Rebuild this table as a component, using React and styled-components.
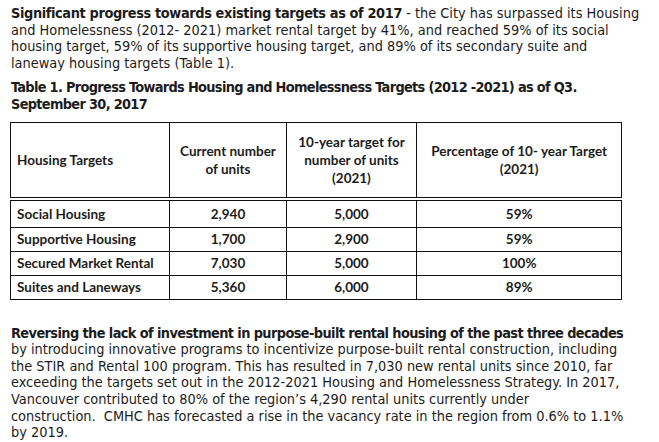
import React from 'react';
import styled, { createGlobalStyle } from 'styled-components';

const GlobalStyle = createGlobalStyle`
  body {
    margin: 0;
    background: #ffffff;
    color: #1c1c1c;
  }
`;

const Page = styled.div`
  width: 659px;
  height: 442px;
  overflow: hidden;
  padding: 5px 0 0 11px;
  box-sizing: border-box;
  font-family: "DejaVu Sans Condensed", "DejaVu Sans", sans-serif;
`;

const Paragraph = styled.p`
  margin: 0;
  font-size: 14.4px;
  line-height: 16.6px;
  white-space: nowrap;
  margin-top: ${(p) => p.$top || 0}px;
`;

const Strong = styled.b`
  font-weight: bold;
  letter-spacing: ${(p) => p.$ls || 0}px;
`;

const Caption = styled.h3`
  margin: 8px 0 0;
  font-size: 14.4px;
  line-height: 16.6px;
  font-weight: bold;
  letter-spacing: -0.68px;
  white-space: nowrap;
`;

const Table = styled.table`
  border-collapse: collapse;
  margin-top: 9px;
  margin-left: -1px;
  width: 612px;
  font-family: Lato, "Open Sans", sans-serif;
  font-weight: bold;
  font-size: 13.5px;
`;

const HeadCell = styled.th`
  border: 1.5px solid #111;
  border-bottom: 4px double #111;
  height: 74px;
  padding: 0 6px;
  font-weight: bold;
  line-height: 18px;
  text-align: ${(p) => (p.$left ? 'left' : 'center')};
  width: ${(p) => p.$w}px;
`;

const Cell = styled.td`
  border: 1.5px solid #111;
  height: ${(p) => (p.$first ? 26 : 23)}px;
  padding: 0 6px;
  text-align: ${(p) => (p.$left ? 'left' : 'center')};
`;

const rows = [
  ['Social Housing', '2,940', '5,000', '59%'],
  ['Supportive Housing', '1,700', '2,900', '59%'],
  ['Secured Market Rental', '7,030', '5,000', '100%'],
  ['Suites and Laneways', '5,360', '6,000', '89%'],
];

export default function App() {
  return (
    <Page>
      <GlobalStyle />
      <Paragraph>
        <Strong $ls={-0.38}>Significant progress towards existing targets as of 2017</Strong> - the City has surpassed its Housing
        <br />
        and Homelessness (2012- 2021) market rental target by 41%, and reached 59% of its social
        <br />
        housing target, 59% of its supportive housing target, and 89% of its secondary suite and
        <br />
        laneway housing targets (Table 1).
      </Paragraph>
      <Caption>
        Table 1. Progress Towards Housing and Homelessness Targets (2012 -2021) as of Q3.
        <br />
        September 30, 2017
      </Caption>
      <Table>
        <thead>
          <tr>
            <HeadCell $left $w={159}>Housing Targets</HeadCell>
            <HeadCell $w={112}>Current number<br />of units</HeadCell>
            <HeadCell $w={129}>10-year target for<br />number of units<br />(2021)</HeadCell>
            <HeadCell $w={211}>Percentage of 10- year Target<br />(2021)</HeadCell>
          </tr>
        </thead>
        <tbody>
          {rows.map((r, i) => (
            <tr key={r[0]}>
              <Cell $left $first={i === 0}>{r[0]}</Cell>
              <Cell>{r[1]}</Cell>
              <Cell>{r[2]}</Cell>
              <Cell>{r[3]}</Cell>
            </tr>
          ))}
        </tbody>
      </Table>
      <Paragraph $top={25}>
        <Strong $ls={-0.6}>Reversing the lack of investment in purpose-built rental housing of the past three decades</Strong>
        <br />
        by introducing innovative programs to incentivize purpose-built rental construction, including
        <br />
        the STIR and Rental 100 program. This has resulted in 7,030 new rental units since 2010, far
        <br />
        exceeding the targets set out in the 2012-2021 Housing and Homelessness Strategy. In 2017,
        <br />
        Vancouver contributed to 80% of the region’s 4,290 rental units currently under
        <br />
        construction.&nbsp; CMHC has forecasted a rise in the vacancy rate in the region from 0.6% to 1.1%
        <br />
        by 2019.
      </Paragraph>
    </Page>
  );
}
